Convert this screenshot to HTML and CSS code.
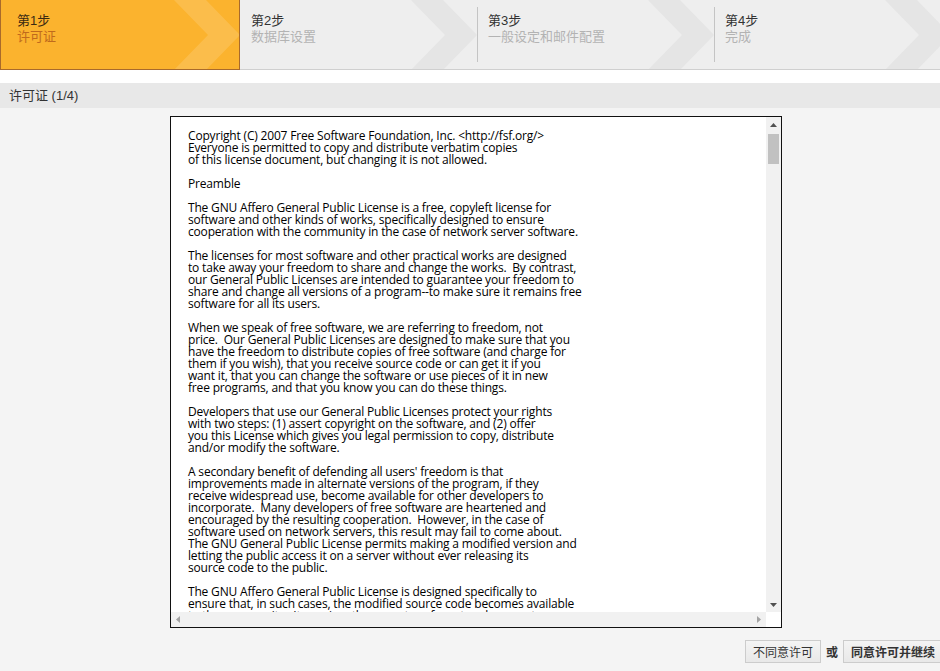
FILE: index.html
```html
<!DOCTYPE html>
<html lang="zh-CN">
<head>
<meta charset="utf-8">
<title>安装 - 许可证</title>
<link rel="stylesheet" href="styles.css">
</head>
<body>
<div class="steps">
  <div class="step active">
    <svg class="chev" width="66" height="70" viewBox="0 0 66 70"><polygon points="0,0 32,0 66,35 32,70 0,70 34,35"/></svg>
    <div class="step-title">第1步</div>
    <div class="step-sub">许可证</div>
  </div>
  <div class="step">
    <svg class="chev" width="66" height="70" viewBox="0 0 66 70"><polygon points="0,0 32,0 66,35 32,70 0,70 34,35"/></svg>
    <div class="step-title">第2步</div>
    <div class="step-sub">数据库设置</div>
  </div>
  <div class="step sep">
    <svg class="chev" width="66" height="70" viewBox="0 0 66 70"><polygon points="0,0 32,0 66,35 32,70 0,70 34,35"/></svg>
    <div class="step-title">第3步</div>
    <div class="step-sub">一般设定和邮件配置</div>
  </div>
  <div class="step sep">
    <svg class="chev" width="66" height="70" viewBox="0 0 66 70"><polygon points="0,0 32,0 66,35 32,70 0,70 34,35"/></svg>
    <div class="step-title">第4步</div>
    <div class="step-sub">完成</div>
  </div>
</div>

<div class="main">
  <h2 class="section-title">许可证 (1/4)</h2>
  <div class="license">
    <div class="license-view">
<div class="license-text">Copyright (C) 2007 Free Software Foundation, Inc. &lt;http://fsf.org/&gt;
Everyone is permitted to copy and distribute verbatim copies
of this license document, but changing it is not allowed.

Preamble

The GNU Affero General Public License is a free, copyleft license for
software and other kinds of works, specifically designed to ensure
cooperation with the community in the case of network server software.

The licenses for most software and other practical works are designed
to take away your freedom to share and change the works.  By contrast,
our General Public Licenses are intended to guarantee your freedom to
share and change all versions of a program--to make sure it remains free
software for all its users.

When we speak of free software, we are referring to freedom, not
price.  Our General Public Licenses are designed to make sure that you
have the freedom to distribute copies of free software (and charge for
them if you wish), that you receive source code or can get it if you
want it, that you can change the software or use pieces of it in new
free programs, and that you know you can do these things.

Developers that use our General Public Licenses protect your rights
with two steps: (1) assert copyright on the software, and (2) offer
you this License which gives you legal permission to copy, distribute
and/or modify the software.

A secondary benefit of defending all users' freedom is that
improvements made in alternate versions of the program, if they
receive widespread use, become available for other developers to
incorporate.  Many developers of free software are heartened and
encouraged by the resulting cooperation.  However, in the case of
software used on network servers, this result may fail to come about.
The GNU General Public License permits making a modified version and
letting the public access it on a server without ever releasing its
source code to the public.

The GNU Affero General Public License is designed specifically to
ensure that, in such cases, the modified source code becomes available
to the community.  It requires the operator of a network server to
provide the source code of the modified version running there to the
users of that server.</div>
    </div>
    <div class="vbar">
      <div class="sb-btn"><svg width="15" height="15" viewBox="0 0 15 15"><polygon points="4,10 11,10 7.5,6" fill="#505050"/></svg></div>
      <div class="vtrack"><div class="vthumb"></div></div>
      <div class="sb-btn"><svg width="15" height="15" viewBox="0 0 15 15"><polygon points="4,6 11,6 7.5,10" fill="#505050"/></svg></div>
    </div>
    <div class="hbar">
      <div class="sb-btn"><svg width="15" height="15" viewBox="0 0 15 15"><polygon points="5,7.5 9,4 9,11" fill="#a3a3a3"/></svg></div>
      <div class="htrack"></div>
      <div class="sb-btn"><svg width="15" height="15" viewBox="0 0 15 15"><polygon points="6,4 10,7.5 6,11" fill="#a3a3a3"/></svg></div>
    </div>
    <div class="corner"></div>
  </div>
  <div class="actions">
    <button class="btn" type="button">不同意许可</button>
    <span class="or">或</span>
    <button class="btn btn-primary" type="button">同意许可并继续</button>
  </div>
</div>
</body>
</html>
```

FILE: styles.css
```css
html, body {
  margin: 0;
  padding: 0;
  overflow: hidden;
  background: #ffffff;
  font-family: "Liberation Sans", "Noto Sans CJK SC", sans-serif;
  font-size: 13px;
  color: #333333;
}

.steps {
  display: flex;
  height: 70px;
  background: #eeeeee;
  width: 960px;
}

.step {
  position: relative;
  box-sizing: border-box;
  width: 237px;
  height: 70px;
  flex: none;
  padding: 13px 0 0 11px;
  border-bottom: 1px solid #cfcfcf;
  overflow: hidden;
}

.step .chev {
  position: absolute;
  right: 0;
  top: 0;
  fill: #e5e5e5;
}

.step-title,
.step-sub {
  position: relative;
  line-height: 16px;
  white-space: nowrap;
}

.step-title {
  color: #333333;
}

.step-sub {
  color: #b3b3b3;
}

.step.active {
  width: 240px;
  background: #fbb32e;
  border: 1px solid #a96a2b;
  border-top: none;
  padding-left: 16px;
}

.step.active .chev {
  right: -1px;
  fill: rgba(255, 255, 255, 0.14);
}

.step.active .step-title {
  color: #3b2a12;
}

.step.active .step-sub {
  color: #c06a1c;
}

.step.sep::before {
  content: "";
  position: absolute;
  left: 0;
  top: 7px;
  bottom: 7px;
  width: 1px;
  background: #c4c4c4;
}

.main {
  margin-top: 13px;
  background: #f4f4f4;
  padding-bottom: 10px;
}

.section-title {
  margin: 0;
  height: 25px;
  line-height: 25px;
  padding-left: 9px;
  background: #e8e8e8;
  font-size: 13px;
  font-weight: normal;
  color: #333333;
}

.license {
  margin: 8px 0 0 170px;
  box-sizing: border-box;
  width: 612px;
  height: 512px;
  border: 1px solid #111111;
  background: #ffffff;
  display: grid;
  grid-template-columns: 1fr 15px;
  grid-template-rows: 1fr 15px;
}

.license-view {
  overflow: hidden;
  min-width: 0;
  min-height: 0;
}

.license-text {
  padding: 13px 17px;
  white-space: pre;
  font-family: "Open Sans", "Noto Sans", sans-serif;
  font-size: 12px;
  line-height: 12px;
  letter-spacing: -0.18px;
  color: #000000;
}

.vbar {
  display: flex;
  flex-direction: column;
  background: #f1f1f1;
}

.hbar {
  display: flex;
  background: #f1f1f1;
}

.sb-btn {
  width: 15px;
  height: 15px;
  flex: none;
}

.sb-btn svg {
  display: block;
}

.vtrack {
  flex: 1;
  padding: 2px 2px 0;
}

.vthumb {
  height: 30px;
  background: #c1c1c1;
}

.htrack {
  flex: 1;
}

.corner {
  background: #ffffff;
}

.actions {
  display: flex;
  align-items: center;
  justify-content: flex-end;
  margin: 12px -3px 0 0;
  gap: 5px;
}

.btn {
  height: 23px;
  padding: 0 7px;
  border: 1px solid #cccccc;
  background: linear-gradient(#f4f4f4, #e8e8e8);
  font-family: "Liberation Sans", "Noto Sans CJK SC", sans-serif;
  font-size: 12px;
  color: #333333;
  border-radius: 0;
}

.btn-primary {
  font-weight: bold;
}

.or {
  font-weight: bold;
  font-size: 12px;
  color: #333333;
}
```
